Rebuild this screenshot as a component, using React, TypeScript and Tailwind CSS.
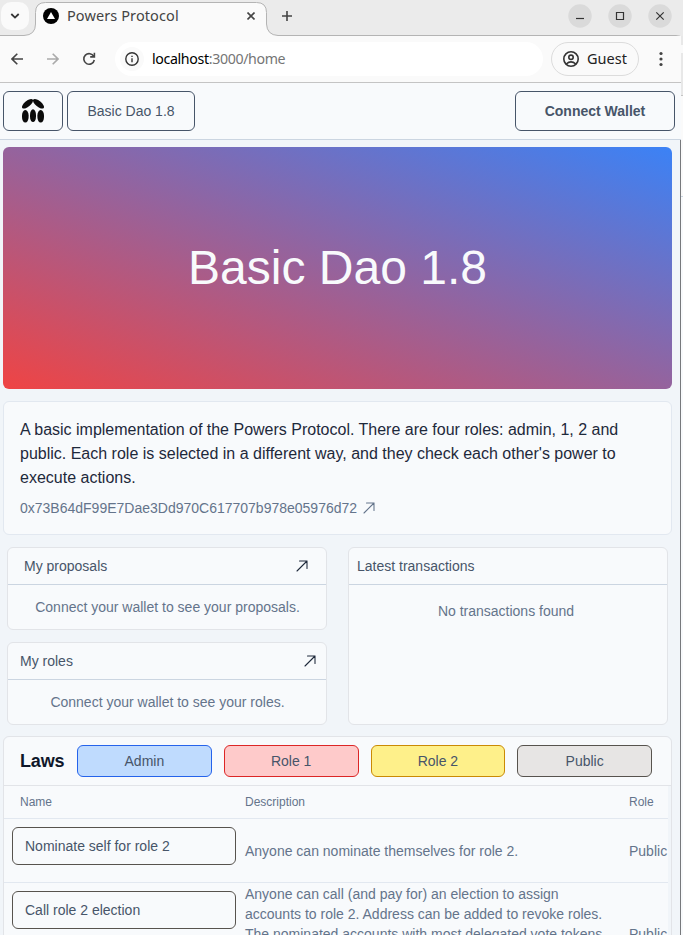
import React from "react";

const ui = "font-['Liberation_Sans',Arial,sans-serif]";
const chromeFont = "font-['Noto_Sans',sans-serif]";

function ArrowUpRight({ className }: { className: string }) {
  return (
    <svg viewBox="0 0 24 24" fill="none" stroke="currentColor" strokeWidth="1.6" className={className}>
      <path d="m4.5 19.5 15-15m0 0H8.25m11.25 0v11.25" strokeLinecap="round" strokeLinejoin="round" />
    </svg>
  );
}

function PowersLogo() {
  return (
    <svg width="24" height="26" viewBox="0 0 24 26" fill="#0b0b0b">
      <ellipse cx="6.500" cy="5.800" rx="6.700" ry="2.900" transform="rotate(-39 6.5 5.8)" />
      <ellipse cx="17.500" cy="5.800" rx="6.700" ry="2.900" transform="rotate(39 17.5 5.8)" />
      <rect x="1" y="12" width="6.600" height="12.600" rx="3.200" ry="5.600" />
      <rect x="9" y="11.300" width="6" height="12.800" rx="3" ry="5.600" />
      <rect x="16.400" y="12" width="6.600" height="12.600" rx="3.200" ry="5.600" />
    </svg>
  );
}

function TabStrip() {
  return (
    <div className="relative flex h-9 w-full shrink-0 items-start bg-[#ebebeb]">
      <svg className="absolute inset-0" width="683" height="36" viewBox="0 0 683 36">
        <path
          d="M0 36V35.5H24Q35.5 35 35.5 24V12.500Q35.500 2.500 45.500 2.500H256.500Q266.500 2.500 266.500 12.500V24Q267 35 278 35.500H674Q681 36 681 36Z"
          fill="#fafafa"
        />
        <path
          d="M0 35.500H24Q35.500 35 35.500 24V12.500Q35.500 2.500 45.500 2.500H256.500Q266.500 2.500 266.500 12.500V24Q267 35 278 35.500H676Q680 35.500 682 38"
          fill="none"
          stroke="#b4b4b4"
        />
      </svg>
      <div className="relative ml-px mt-0.5 flex h-7 w-7 items-center justify-center rounded-[10px] bg-[#fafafa]">
        <svg width="10" height="6" viewBox="0 0 10 6" fill="none" stroke="#333" strokeWidth="1.8">
          <path d="m1.300 1 3.700 3.600L8.700 1" />
        </svg>
      </div>
      <div className="relative ml-3.5 mt-2 flex h-4 w-56 items-center">
        <svg width="16" height="16" viewBox="0 0 16 16">
          <circle cx="8" cy="8" r="8" fill="#000" />
          <path d="M8 4 12 11H4Z" fill="#fff" />
        </svg>
        <span className={`-mt-0.5 ml-2 whitespace-nowrap text-[14.5px] leading-4 tracking-[0.1px] text-[#444] ${chromeFont}`}>Powers Protocol</span>
        <svg className="ml-auto mr-3" width="8" height="8" viewBox="0 0 8 8" stroke="#444" strokeWidth="1.600">
          <path d="m.5.5 7 7m0-7-7 7" />
        </svg>
      </div>
      <svg className="relative ml-[15px] mt-[11px]" width="10" height="10" viewBox="0 0 10 10" stroke="#444" strokeWidth="1.600">
        <path d="M5 0v10M0 5h10" />
      </svg>
      <div className="relative ml-auto mr-[11px] mt-1 flex gap-4">
        <WindowButton><path d="M8 14.500h8" /></WindowButton>
        <WindowButton><path d="M8.500 8.500h7v7h-7z" /></WindowButton>
        <WindowButton><path d="m8.300 8.300 7.400 7.400m0-7.400-7.400 7.400" /></WindowButton>
      </div>
    </div>
  );
}

function WindowButton({ children }: { children: React.ReactNode }) {
  return (
    <svg width="24" height="24" viewBox="0 0 24 24" fill="none" stroke="#333" strokeWidth="1.200">
      <circle cx="12" cy="12" r="11.700" fill="#dadada" stroke="none" />
      {children}
    </svg>
  );
}

function Toolbar() {
  return (
    <div className="flex h-[47px] w-[681px] shrink-0 items-start border-b border-[#c4c4c4] bg-[#fafafa] pt-1.5">
      <div className="flex h-[34px] w-[115px] shrink-0 items-center pl-[11px]">
        <svg width="12" height="12" viewBox="0 0 12 12" fill="none" stroke="#444" strokeWidth="1.600">
          <path d="M12 6H1M6.300.7 1 6l5.300 5.300" />
        </svg>
        <svg className="ml-6" width="12" height="12" viewBox="0 0 12 12" fill="none" stroke="#aaa" strokeWidth="1.600">
          <path d="M0 6h11M5.700.7 11 6l-5.300 5.300" />
        </svg>
        <svg className="ml-[23px]" width="14" height="14" viewBox="0 0 14 14" fill="none" stroke="#444" strokeWidth="1.600">
          <path d="M11.800 4.500A5.300 5.300 0 1 0 12.300 8M12.400.8v4.100H8.200" />
        </svg>
      </div>
      <div className="flex h-[34px] w-[428px] shrink-0 items-center rounded-full bg-white pl-[5px]">
        <div className="flex h-6 w-6 items-center justify-center rounded-full bg-[#fafafa]">
          <svg width="14" height="14" viewBox="0 0 14 14" fill="none" stroke="#333" strokeWidth="1.400">
            <circle cx="7" cy="7" r="6.200" />
            <path d="M7 6.200v4M7 3.700v1.400" />
          </svg>
        </div>
        <span className={`-mt-px ml-2 whitespace-nowrap text-[14.2px] leading-5 tracking-[-0.36px] text-[#757575] ${chromeFont}`}>
          <span className="text-black">localhost</span>:3000/home
        </span>
      </div>
      <div className="ml-2 flex h-[34px] w-[88px] shrink-0 items-center rounded-full border border-[#dcdcdc] pl-[11px]">
        <svg width="16" height="16" viewBox="0 0 16 16" fill="none" stroke="#333" strokeWidth="1.600">
          <circle cx="8" cy="8" r="7.200" />
          <circle cx="8" cy="6.300" r="2.200" />
          <path d="M3.200 13Q8 8.800 12.800 13" />
        </svg>
        <span className={`-mt-0.5 ml-2 text-[14.5px] leading-5 text-[#222] ${chromeFont}`}>Guest</span>
      </div>
      <svg className="ml-5 mt-[9px]" width="4" height="16" viewBox="0 0 4 16" fill="#444">
        <circle cx="2" cy="2.500" r="1.600" />
        <circle cx="2" cy="8" r="1.600" />
        <circle cx="2" cy="13.500" r="1.600" />
      </svg>
    </div>
  );
}

function NavBar() {
  return (
    <div className="flex h-[57px] w-[681px] shrink-0 items-start border-b border-[#cbd5e1] bg-[#f8fafc] pl-[3px] pr-1.5 pt-2 text-sm text-[#475569]">
      <div className="flex h-10 w-[60px] items-center justify-center rounded-md border border-[#475569]">
        <PowersLogo />
      </div>
      <div className="ml-1 flex h-10 w-32 items-center justify-center rounded-md border border-[#475569]">Basic Dao 1.8</div>
      <div className="ml-auto flex h-10 w-40 items-center justify-center rounded-md border border-[#475569] font-bold">Connect Wallet</div>
    </div>
  );
}

function Panel({ title, message, inset }: { title: string; message: string; inset: string }) {
  return (
    <div className="flex h-[83px] flex-col rounded-md border border-[#e2e4e8] bg-[#f8fafc] text-sm">
      <div className={`flex h-[37px] shrink-0 items-center justify-between border-b border-[#cbd5e1] text-[#475569] ${inset}`}>
        <span>{title}</span>
        <ArrowUpRight className="h-4 w-4 text-[#1e293b]" />
      </div>
      <div className="flex grow items-center justify-center pl-px text-[#64748b]">{message}</div>
    </div>
  );
}

const filters = [
  { label: "Admin", tone: "border-[#2563eb] bg-[#bfdbfe]" },
  { label: "Role 1", tone: "border-[#dc2626] bg-[#fecaca]" },
  { label: "Role 2", tone: "border-[#ca8a04] bg-[#fef08a]" },
  { label: "Public", tone: "border-[#57534e] bg-[#e7e5e4]" },
];

function Laws() {
  return (
    <div className="mt-[11px] h-[260px] w-[669px] shrink-0 rounded-t-md border border-[#e2e4e8]">
      <div className="flex h-[49px] items-center rounded-t-md border-b border-[#e2e4e8] bg-[#f8fafc] pl-4 pr-[19px]">
        <h2 className="w-[57px] shrink-0 text-lg font-bold tracking-[-0.15px] text-[#0f172a]">Laws</h2>
        <div className="grid grow grid-cols-4 gap-3">
          {filters.map((f) => (
            <div key={f.label} className={`flex h-8 items-center justify-center rounded-md border text-sm text-[#475569] ${f.tone}`}>
              {f.label}
            </div>
          ))}
        </div>
      </div>
      <div className="w-[664px] overflow-hidden bg-[#f8fafc] text-sm text-[#64748b]">
        <div className="flex h-[33px] items-center border-b border-[#e2e8f0] pl-4 text-xs">
          <span className="w-[225px]">Name</span>
          <span className="w-96">Description</span>
          <span>Role</span>
        </div>
        <div className="flex h-16 border-b border-[#e2e8f0] pl-2 pt-2">
          <div className="flex h-[38px] w-56 shrink-0 items-center rounded-md border border-[#57534e] pl-3 text-[#475569]">Nominate self for role 2</div>
          <div className="ml-[9px] w-96 shrink-0 pt-3.5 leading-5">Anyone can nominate themselves for role 2.</div>
          <div className="shrink-0 pt-3.5 leading-5">Public</div>
        </div>
        <div className="flex h-28 pl-2">
          <div className="mt-2 flex h-[38px] w-56 shrink-0 items-center rounded-md border border-[#57534e] pl-3 text-[#475569]">Call role 2 election</div>
          <div className="ml-[9px] w-96 shrink-0 pt-px leading-5">
            Anyone can call (and pay for) an election to assign<br />
            accounts to role 2. Address can be added to revoke roles.<br />
            The nominated accounts with most delegated vote tokens
          </div>
          <div className="shrink-0 pt-[41px] leading-5">Public</div>
        </div>
      </div>
    </div>
  );
}

function Page() {
  return (
    <div className="flex min-h-0 w-[681px] grow flex-col overflow-hidden border-r border-[#77797c] bg-[#f1f5f9] pl-[3px] pt-[7px]">
      <div className="flex h-[242px] w-[669px] shrink-0 items-center justify-center rounded-md bg-[linear-gradient(to_top_right,#ef4444,#3b82f6)] text-5xl text-[#f8fafc]">
        Basic Dao 1.8
      </div>
      <div className="mt-3 h-[134px] w-[669px] shrink-0 rounded-md border border-[#e2e8f0] bg-[#f8fafc] px-4 pt-4">
        <p className="w-[610px] text-base leading-6 text-[#1e293b]">
          A basic implementation of the Powers Protocol. There are four roles: admin, 1, 2 and public. Each role is selected in a different way, and they check each other's power to execute actions.
        </p>
        <div className="mt-2 flex items-center gap-1 text-sm leading-5 text-[#64748b]">
          <span>0x73B64dF99E7Dae3Dd970C617707b978e05976d72</span>
          <ArrowUpRight className="h-4 w-4" />
        </div>
      </div>
      <div className="mt-3 flex shrink-0 pl-1">
        <div className="flex w-80 flex-col gap-3">
          <Panel title="My proposals" message="Connect your wallet to see your proposals." inset="pl-4 pr-4" />
          <Panel title="My roles" message="Connect your wallet to see your roles." inset="pl-3 pr-2" />
        </div>
        <div className="ml-[21px] h-[178px] w-80 rounded-md border border-[#e2e4e8] bg-[#f8fafc] text-sm">
          <div className="flex h-[37px] items-center border-b border-[#cbd5e1] pl-2 text-[#475569]">Latest transactions</div>
          <div className="pr-1 pt-4 text-center leading-5 text-[#64748b]">No transactions found</div>
        </div>
      </div>
      <Laws />
    </div>
  );
}

export default function App() {
  return (
    <div className={`flex h-[935px] w-[683px] flex-col overflow-hidden bg-[#ebebeb] ${ui}`}>
      <TabStrip />
      <div className="flex min-h-0 grow">
        <div className="flex w-[681px] shrink-0 flex-col">
          <Toolbar />
          <NavBar />
          <Page />
        </div>
        <div className="flex w-0.5 flex-col">
          <div className="h-[9px] bg-[#e8e8e8]" />
          <div className="h-2 bg-[#fafafa]" />
          <div className="h-[43px] border-b border-[#c4c4c4] bg-[#e8e8e8]" />
          <div className="h-[101px] border-b border-[#cbd5e1] bg-[#fafafa]" />
          <div className="grow bg-[#f8fafc]" />
        </div>
      </div>
    </div>
  );
}
